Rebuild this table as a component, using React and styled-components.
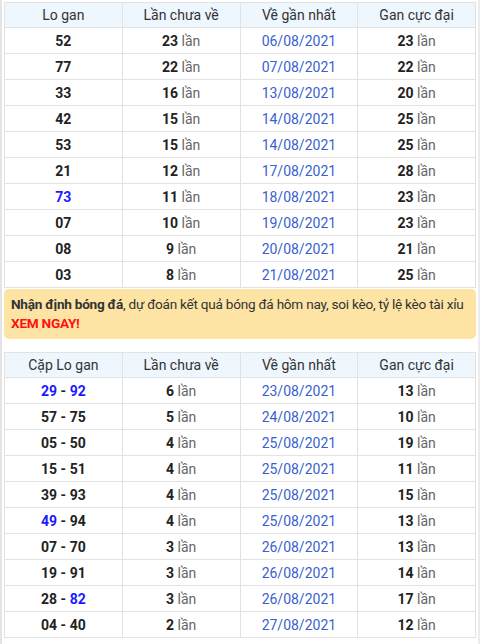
import React from 'react';
import styled, { createGlobalStyle } from 'styled-components';

const GlobalStyle = createGlobalStyle`
  html, body {
    margin: 0;
    padding: 0;
    background: #ffffff;
  }
  body {
    font-family: Roboto, "Noto Sans", "Liberation Sans", sans-serif;
    color: #222;
  }
`;

const Page = styled.div`
  width: 480px;
  height: 644px;
  box-sizing: border-box;
  border-left: 2px solid #e4e4e4;
  border-right: 2px solid #ececec;
  padding: 2px 2px 0 1px;
  overflow: hidden;
`;

const Table = styled.table`
  width: 472px;
  border-collapse: collapse;
  table-layout: fixed;
  margin-left: 1px;
  font-size: 14px;
`;

const Th = styled.th`
  height: 24px;
  padding: 0;
  background: #eef6fe;
  border: 1px solid #e2e2e2;
  font-weight: 400;
  color: #333;
  text-align: center;
`;

const Td = styled.td`
  height: 25px;
  padding: 0;
  border: 1px solid #e2e2e2;
  text-align: center;
  color: #222;
`;

const Num = styled.b`
  font-weight: 700;
  color: ${(p) => (p.$blue ? '#1a1aff' : '#222')};
`;

const Unit = styled.span`
  color: #666;
`;

const DateText = styled.span`
  color: #3a5fd0;
`;

const Banner = styled.div`
  margin: 1px 0 0 1px;
  width: 472px;
  box-sizing: border-box;
  height: 50px;
  padding: 6px 7px;
  background: #fde4a4;
  border-radius: 5px;
  font-size: 13.6px;
  line-height: 19px;
  color: #333;
`;

const BannerLine = styled.div`
  white-space: nowrap;
  letter-spacing: -0.25px;
`;

const Strong = styled.b`
  font-weight: 700;
  color: ${(p) => p.$color || '#333'};
`;

const Gap = styled.div`
  height: 13px;
`;

const table1 = [
  ['52', 23, '06/08/2021', 23],
  ['77', 22, '07/08/2021', 22],
  ['33', 16, '13/08/2021', 20],
  ['42', 15, '14/08/2021', 25],
  ['53', 15, '14/08/2021', 25],
  ['21', 12, '17/08/2021', 28],
  ['73', 11, '18/08/2021', 23, true],
  ['07', 10, '19/08/2021', 23],
  ['08', 9, '20/08/2021', 21],
  ['03', 8, '21/08/2021', 25],
];

const table2 = [
  [['29', true], ['92', true], 6, '23/08/2021', 13],
  [['57'], ['75'], 5, '24/08/2021', 10],
  [['05'], ['50'], 4, '25/08/2021', 19],
  [['15'], ['51'], 4, '25/08/2021', 11],
  [['39'], ['93'], 4, '25/08/2021', 15],
  [['49', true], ['94'], 4, '25/08/2021', 13],
  [['07'], ['70'], 3, '26/08/2021', 13],
  [['19'], ['91'], 3, '26/08/2021', 14],
  [['28'], ['82', true], 3, '26/08/2021', 17],
  [['04'], ['40'], 2, '27/08/2021', 12],
];

const Times = ({ n }) => (
  <>
    <Num>{n}</Num> <Unit>lần</Unit>
  </>
);

const Header = ({ first }) => (
  <thead>
    <tr>
      <Th>{first}</Th>
      <Th>Lần chưa về</Th>
      <Th>Về gần nhất</Th>
      <Th>Gan cực đại</Th>
    </tr>
  </thead>
);

export default function App() {
  return (
    <Page>
      <GlobalStyle />
      <Table>
        <Header first="Lo gan" />
        <tbody>
          {table1.map(([lo, miss, date, max, blue]) => (
            <tr key={lo}>
              <Td>
                <Num $blue={blue}>{lo}</Num>
              </Td>
              <Td>
                <Times n={miss} />
              </Td>
              <Td>
                <DateText>{date}</DateText>
              </Td>
              <Td>
                <Times n={max} />
              </Td>
            </tr>
          ))}
        </tbody>
      </Table>
      <Banner>
        <BannerLine>
          <Strong>Nhận định bóng đá</Strong>, dự đoán kết quả bóng đá hôm nay, soi kèo, tỷ lệ kèo tài xỉu
        </BannerLine>
        <BannerLine>
          <Strong $color="#ff1010">XEM NGAY!</Strong>
        </BannerLine>
      </Banner>
      <Gap />
      <Table>
        <Header first="Cặp Lo gan" />
        <tbody>
          {table2.map(([a, b, miss, date, max]) => (
            <tr key={a[0]}>
              <Td>
                <Num $blue={a[1]}>{a[0]}</Num> <Num>-</Num> <Num $blue={b[1]}>{b[0]}</Num>
              </Td>
              <Td>
                <Times n={miss} />
              </Td>
              <Td>
                <DateText>{date}</DateText>
              </Td>
              <Td>
                <Times n={max} />
              </Td>
            </tr>
          ))}
        </tbody>
      </Table>
    </Page>
  );
}
